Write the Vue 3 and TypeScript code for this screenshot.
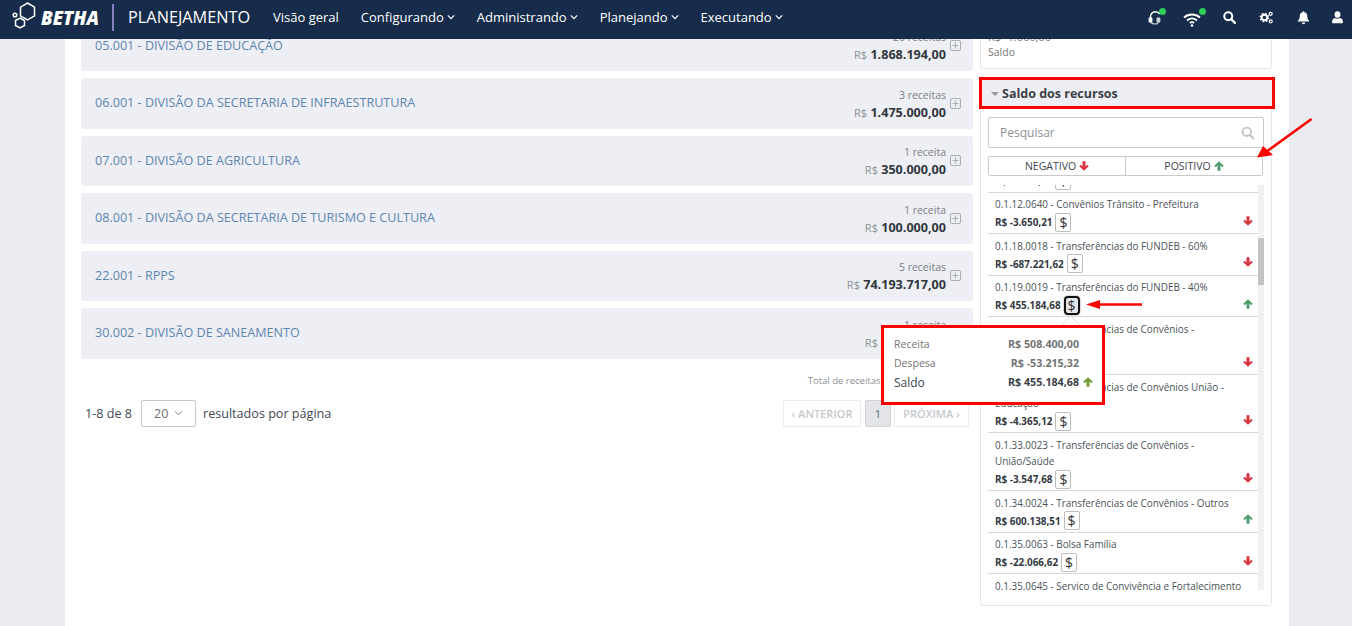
<template>
  <div class="page">
    <header class="navbar">
      <div class="brand">
        <svg class="logo" viewBox="0 0 26 30" fill="none" stroke="#fff" stroke-width="1.5">
          <path d="M16.5 1l7 4.200v8.600l-7 4.200-7-4.200V5.200z"></path>
          <path d="M9 16l4.500 2.500v5L9 26l-4.500-2.500v-5z"></path>
          <circle cx="4" cy="13" r="1.800"></circle>
        </svg>
        <span class="brand-name">BETHA</span>
        <span class="brand-sep"></span>
        <span class="brand-app">PLANEJAMENTO</span>
      </div>
      <nav class="menu">
        <a v-for="item in menu" :key="item.label" class="menu-item">
          {{ item.label }}
          <svg v-if="item.sub" class="chev" viewBox="0 0 10 6" fill="none" stroke="currentColor" stroke-width="1.600">
            <path d="M1 1l4 4 4-4"></path>
          </svg>
        </a>
      </nav>
      <div class="nav-icons">
        <span class="nav-icon">
          <svg viewBox="0 0 18 18" fill="none" stroke="#fff" stroke-width="1.700">
            <path d="M3 11V8a6 6 0 0 1 11-3.200"></path>
            <rect x="1.500" y="9.500" width="3" height="5" rx="1" fill="#fff"></rect>
            <rect x="11" y="9.500" width="3" height="5" rx="1" fill="#cfd4da" stroke="#cfd4da"></rect>
            <path d="M4 15.500c2 1.500 6 1.500 8 .5" stroke="#cfd4da"></path>
          </svg>
          <i class="dot"></i>
        </span>
        <span class="nav-icon wifi">
          <svg viewBox="0 0 18 18" fill="none" stroke="#fff" stroke-width="1.800">
            <path d="M1 7.500c4.500-4 11.500-4 16 0"></path>
            <path d="M4 10.500c3-2.500 7-2.500 10 0"></path>
            <path d="M6.800 13c1.300-1 3.100-1 4.400 0"></path>
            <circle cx="9" cy="15.500" r="1.200" fill="#fff" stroke="none"></circle>
          </svg>
          <i class="dot"></i>
        </span>
        <span class="nav-icon">
          <svg viewBox="0 0 18 18" fill="none" stroke="#fff">
            <circle cx="7.500" cy="7.500" r="4.800" stroke-width="2.400"></circle>
            <path d="M11 11l4.500 4.500" stroke-width="2.800" stroke-linecap="round"></path>
          </svg>
        </span>
        <span class="nav-icon">
          <svg viewBox="0 0 18 18" fill="none" stroke="#fff">
            <circle cx="6.500" cy="9" r="3.400" stroke-width="2.400"></circle>
            <circle cx="6.500" cy="9" r="5" stroke-width="1.600" stroke-dasharray="2 1.930"></circle>
            <circle cx="14" cy="4.500" r="1.800" stroke-width="1.500"></circle>
            <circle cx="14" cy="13.500" r="1.800" stroke-width="1.500"></circle>
          </svg>
        </span>
        <span class="nav-icon">
          <svg viewBox="0 0 18 18" fill="#fff">
            <path d="M9 1.500c.7 0 1.100.5 1.100 1.100 2.300.5 3.400 2.300 3.400 4.600 0 3 .9 4.600 2.200 5.800v.8H2.300V13c1.300-1.200 2.200-2.800 2.200-5.800 0-2.300 1.100-4.100 3.400-4.600 0-.6.400-1.100 1.100-1.100z"></path>
            <path d="M7 15h4a2 2 0 0 1-4 0z"></path>
          </svg>
        </span>
        <span class="nav-icon user">
          <svg viewBox="0 0 18 18" fill="#fff">
            <ellipse cx="9" cy="5.500" rx="3.500" ry="4"></ellipse>
            <path d="M3.500 16c-.8 0-1-.5-1-1.300 0-2.900 1-5 3.500-5.200 1.800 1.200 4.200 1.200 6 0 2.500.2 3.500 2.300 3.500 5.200 0 .8-.2 1.300-1 1.300z"></path>
          </svg>
        </span>
      </div>
    </header>

    <main class="sheet">
      <section class="left">
        <div class="rows">
          <article v-for="row in divisions" :key="row.name" class="division">
            <span class="division-name">{{ row.name }}</span>
            <div class="division-total">
              <div class="division-count">{{ row.count }}</div>
              <div class="division-value"><small>R$</small> {{ row.value }}</div>
            </div>
            <svg class="plus" viewBox="0 0 11 11" fill="none" stroke="#a9adb3">
              <rect x=".5" y=".5" width="10" height="10" rx="1.500"></rect>
              <path d="M5.500 2.500v6M2.500 5.500h6"></path>
            </svg>
          </article>
        </div>
        <div class="total-line">Total de receitas: R$ 83.456.911,00</div>
        <div class="pager">
          <div class="pager-info">
            <span>1-8 de 8</span>
            <div class="page-size">
              20
              <svg viewBox="0 0 10 6" fill="none" stroke="#777" stroke-width="1">
                <path d="M1 1l4 4 4-4"></path>
              </svg>
            </div>
            <span>resultados por página</span>
          </div>
          <div class="pager-buttons">
            <button class="pg pg-prev">&lsaquo; ANTERIOR</button>
            <button class="pg pg-num">1</button>
            <button class="pg pg-next">PRÓXIMA &rsaquo;</button>
          </div>
        </div>
      </section>

      <aside class="right">
        <div class="summary">
          <div class="summary-value">R$ -1.000,00</div>
          <div class="summary-label">Saldo</div>
        </div>
        <div class="panel">
          <div class="panel-head">
            <span class="caret"></span>
            Saldo dos recursos
          </div>
          <div class="search">
            <span>Pesquisar</span>
            <svg viewBox="0 0 14 14" fill="none" stroke="#c4c4c4">
              <circle cx="5.800" cy="5.800" r="4.200" stroke-width="1.800"></circle>
              <path d="M9 9l4 4" stroke-width="2.200"></path>
            </svg>
          </div>
          <div class="filters">
            <button class="filter">
              NEGATIVO
              <svg class="arrow down" viewBox="0 0 12 12"><path :d="arrowPath"></path></svg>
            </button>
            <button class="filter">
              POSITIVO
              <svg class="arrow up" viewBox="0 0 12 12"><path :d="arrowPath"></path></svg>
            </button>
          </div>
          <div class="list-wrap">
            <div class="list">
              <div v-for="item in resources" :key="item.title" class="resource">
                <div class="resource-title">{{ item.title }}</div>
                <div class="resource-line">
                  <strong>{{ item.value }}</strong>
                  <span class="money" :class="{ active: item.active }">$</span>
                  <svg class="arrow" :class="item.value.includes('-') ? 'down' : 'up'" viewBox="0 0 12 12">
                    <path :d="arrowPath"></path>
                  </svg>
                </div>
              </div>
            </div>
            <div class="scrollbar"><div class="thumb"></div></div>
          </div>
        </div>
      </aside>
    </main>

    <div class="tip">
      <svg class="tip-notch" viewBox="0 0 18 9"><path d="M0 9L9 0l9 9" fill="#fff" stroke="#ddd"></path></svg>
      <div class="tip-row"><span>Receita</span><b>R$ 508.400,00</b></div>
      <div class="tip-row"><span>Despesa</span><b>R$ -53.215,32</b></div>
      <div class="tip-row saldo">
        <span>Saldo</span>
        <b>R$ 455.184,68</b>
        <svg viewBox="0 0 12 12"><path :d="arrowPath"></path></svg>
      </div>
    </div>

    <svg class="marks" viewBox="0 0 1352 626" fill="#f00" stroke="none">
      <path d="M1311.500 119L1266 152" stroke="#f00" stroke-width="2.600"></path>
      <path d="M1257 157.500L1263 146L1273 155z"></path>
      <path d="M1142 304.500H1098" stroke="#f00" stroke-width="2.600"></path>
      <path d="M1086 304.500L1100 300V309z"></path>
    </svg>
  </div>
</template>

<script setup lang="ts">
interface Resource {
  title: string
  value: string
  active?: boolean
}

const arrowPath = 'M6 .3l5.700 5.500-1.700 1.700-2.200-2.100v6.300H4.200V5.400L2 7.500.3 5.800z'

const menu = [
  { label: 'Visão geral', sub: false },
  { label: 'Configurando', sub: true },
  { label: 'Administrando', sub: true },
  { label: 'Planejando', sub: true },
  { label: 'Executando', sub: true },
]

const divisions = [
  { name: '05.001 - DIVISÃO DE EDUCAÇÃO', count: '20 receitas', value: '1.868.194,00' },
  { name: '06.001 - DIVISÃO DA SECRETARIA DE INFRAESTRUTURA', count: '3 receitas', value: '1.475.000,00' },
  { name: '07.001 - DIVISÃO DE AGRICULTURA', count: '1 receita', value: '350.000,00' },
  { name: '08.001 - DIVISÃO DA SECRETARIA DE TURISMO E CULTURA', count: '1 receita', value: '100.000,00' },
  { name: '22.001 - RPPS', count: '5 receitas', value: '74.193.717,00' },
  { name: '30.002 - DIVISÃO DE SANEAMENTO', count: '1 receita', value: '508.400,00' },
]

const resources: Resource[] = [
  { title: '0.1.11.0000 - Convênios', value: 'R$ -1.200,00' },
  { title: '0.1.12.0640 - Convênios Trânsito - Prefeitura', value: 'R$ -3.650,21' },
  { title: '0.1.18.0018 - Transferências do FUNDEB - 60%', value: 'R$ -687.221,62' },
  { title: '0.1.19.0019 - Transferências do FUNDEB - 40%', value: 'R$ 455.184,68', active: true },
  { title: '0.1.31.0021 - Transferências de Convênios - Estado/Educação', value: 'R$ -2.310,40' },
  { title: '0.1.32.0022 - Transferências de Convênios União - Educação', value: 'R$ -4.365,12' },
  { title: '0.1.33.0023 - Transferências de Convênios - União/Saúde', value: 'R$ -3.547,68' },
  { title: '0.1.34.0024 - Transferências de Convênios - Outros', value: 'R$ 600.138,51' },
  { title: '0.1.35.0063 - Bolsa Família', value: 'R$ -22.066,62' },
  { title: '0.1.35.0645 - Serviço de Convivência e Fortalecimento', value: 'R$ -1.050,00' },
]
</script>

<style>
html,
body {
  margin: 0;
  background: #ebecf0;
}
</style>

<style scoped>
.page {
  position: relative;
  height: 626px;
  overflow: hidden;
  background: #ebecf0;
  font-family: 'Open Sans', sans-serif;
  color: #3c4650;
}

.navbar {
  position: relative;
  z-index: 3;
  display: flex;
  align-items: center;
  height: 39px;
  padding-bottom: 5px;
  box-sizing: border-box;
  background: #162c4a;
  color: #fff;
}

.brand {
  display: flex;
  align-items: center;
  padding-left: 11px;
  width: 273px;
  box-sizing: border-box;
  flex: none;
}

.logo {
  width: 26px;
  height: 30px;
}

.brand-name {
  margin-left: 4px;
  font-size: 18.500px;
  font-weight: 800;
  font-style: italic;
}

.brand-sep {
  width: 2px;
  height: 27px;
  margin: 0 14px 0 13px;
  background: #8683c0;
}

.brand-app {
  font-size: 16.300px;
  line-height: 20px;
}

.menu {
  display: flex;
  gap: 22px;
  font-size: 13px;
}

.menu-item {
  display: flex;
  align-items: center;
  gap: 3px;
  white-space: nowrap;
}

.chev {
  width: 8px;
  height: 6px;
}

.nav-icons {
  display: flex;
  align-items: center;
  margin-left: auto;
  padding-right: 7px;
  gap: 22px;
}

.nav-icon {
  position: relative;
  display: block;
  width: 15px;
  height: 15px;
}

.nav-icon.user {
  margin-left: -3px;
}

.nav-icon svg {
  display: block;
  width: 15px;
  height: 15px;
}

.nav-icon.wifi svg {
  width: 18px;
  height: 18px;
  margin-left: -2px;
}

.dot {
  position: absolute;
  top: -1.5px;
  right: -2.5px;
  width: 7px;
  height: 7px;
  border-radius: 50%;
  background: #2ecc58;
}

.wifi .dot {
  right: -5.5px;
}

.sheet {
  display: flex;
  gap: 7px;
  height: 606px;
  margin: -18.5px 63px 0 65px;
  padding: 0 16px;
  background: #fff;
}

.left {
  width: 892px;
  flex: none;
}

.rows {
  display: flex;
  flex-direction: column;
  gap: 7px;
}

.division {
  display: flex;
  align-items: center;
  height: 50.5px;
  padding: 0 12px 0 14px;
  box-sizing: border-box;
  background: #eeeff4;
  border-radius: 3px;
}

.division-name {
  flex: 1;
  margin-bottom: 1px;
  font-size: 12.600px;
  color: #5d86b1;
}

.division-total {
  margin-top: 3px;
  text-align: right;
}

.division-count {
  font-size: 10.5px;
  line-height: 16px;
  color: #7a7f85;
}

.division-value {
  font-size: 12.600px;
  line-height: 20px;
  font-weight: 700;
  color: #30363d;
}

.division-value small {
  font-size: 11px;
  font-weight: 400;
  color: #8b9096;
}

.plus {
  width: 11px;
  height: 11px;
  margin-left: 4px;
}

.total-line {
  margin-top: 15px;
  padding-right: 12px;
  font-size: 9.500px;
  line-height: 14px;
  text-align: right;
  color: #8a8f94;
}

.pager {
  display: flex;
  align-items: center;
  justify-content: space-between;
  margin-top: 12px;
  padding: 0 4px;
}

.pager-info {
  display: flex;
  align-items: center;
  gap: 7px;
  font-size: 12.600px;
  color: #3f4a55;
}

.page-size {
  display: flex;
  align-items: center;
  justify-content: space-between;
  width: 55px;
  height: 27px;
  margin-left: 2px;
  padding: 0 12px;
  box-sizing: border-box;
  border: 1px solid #c8c8c8;
  border-radius: 2px;
  color: #6d7278;
}

.page-size svg {
  width: 9px;
  height: 6px;
}

.pager-buttons {
  display: flex;
  gap: 3px;
}

.pg {
  height: 27px;
  padding: 0;
  box-sizing: border-box;
  border: 1px solid #ececec;
  border-radius: 2px;
  background: #fff;
  font-family: inherit;
  font-size: 11px;
  font-weight: 600;
  color: #c6c9cc;
}

.pg-prev {
  width: 78px;
  margin-right: 1px;
}

.pg-next {
  width: 75px;
}

.pg-num {
  width: 26px;
  border-color: #cfd2d6;
  background: #e2e4e8;
  color: #5a6a7a;
  font-weight: 400;
  font-size: 11px;
}

.right {
  width: 292px;
  flex: none;
}

.summary {
  height: 48.5px;
  padding: 8px 7px 0;
  box-sizing: border-box;
  border: 1px solid #e6e6e6;
  border-radius: 0 0 3px 3px;
  color: #777;
  font-size: 10.5px;
}

.summary-value {
  font-size: 11px;
  line-height: 14px;
}

.summary-label {
  margin-top: 1px;
  line-height: 14px;
}

.panel {
  width: 292px;
  height: 529px;
  margin-top: 8px;
  box-sizing: border-box;
  border: 1px solid #e6e6e6;
  border-radius: 3px;
}

.panel-head {
  display: flex;
  align-items: center;
  gap: 3px;
  width: 296px;
  height: 32px;
  margin: -1px 0 0 -2px;
  padding-left: 9px;
  box-sizing: border-box;
  border: 3px solid #f00;
  background: #eeeff4;
  font-size: 12.500px;
  font-weight: 700;
  color: #3c4148;
}

.caret {
  width: 0;
  height: 0;
  margin-top: 2px;
  border-style: solid;
  border-width: 4px 4px 0;
  border-color: #9a9a9a transparent transparent;
}

.search {
  display: flex;
  align-items: center;
  justify-content: space-between;
  width: 276px;
  height: 31px;
  margin: 8px 7px 0;
  padding: 0 8px 0 11px;
  box-sizing: border-box;
  border: 1px solid #c9c9c9;
  border-radius: 2px;
  font-size: 12px;
  color: #8b8f94;
}

.search svg {
  width: 14px;
  height: 14px;
}

.filters {
  display: flex;
  width: 275px;
  height: 20px;
  margin: 8px 7px 0;
  box-sizing: border-box;
  border: 1px solid #c9c9c9;
  border-radius: 2px;
}

.filter {
  flex: 1;
  display: flex;
  align-items: center;
  justify-content: center;
  gap: 3px;
  padding: 0;
  border: 0;
  background: #fff;
  font-family: inherit;
  font-size: 10.500px;
  color: #3c4650;
}

.filter + .filter {
  border-left: 1px solid #c9c9c9;
}

.arrow {
  width: 10px;
  height: 10px;
  flex: none;
}

.arrow.down {
  transform: rotate(180deg);
  fill: #d9343f;
}

.arrow.up {
  fill: #4f9e72;
}

.list-wrap {
  display: flex;
  height: 405px;
  margin: 9px 7px 0;
  overflow: hidden;
}

.list {
  width: 270px;
  flex: none;
  margin-top: -34px;
}

.resource {
  padding: 3.5px 7px 0;
  box-sizing: border-box;
  border-bottom: 1px solid #d8d8d8;
}

.resource-title {
  font-size: 9.900px;
  line-height: 16.500px;
  color: #4a5157;
}

.resource-line {
  display: flex;
  align-items: center;
  height: 19px;
  margin-bottom: 1.5px;
  font-size: 9.900px;
  color: #33393f;
}

.resource-line .arrow {
  margin-left: auto;
  margin-right: -2px;
  margin-top: -3px;
}

.money {
  display: flex;
  align-items: center;
  justify-content: center;
  width: 16px;
  height: 19px;
  margin-left: 3px;
  box-sizing: border-box;
  border: 1px solid #bdbdbd;
  border-radius: 2px;
  font-size: 14px;
  color: #333;
}

.money.active {
  border: 2px solid #111;
  border-radius: 4px;
  background: #e6e7ea;
  box-shadow: 0 0 0 1px #ddd;
}

.scrollbar {
  width: 6px;
  background: #f1f1f1;
}

.thumb {
  height: 47px;
  margin-top: 53px;
  background: #c4c4c4;
}

.tip {
  position: absolute;
  z-index: 2;
  left: 881px;
  top: 325px;
  width: 224px;
  height: 80px;
  box-sizing: border-box;
  padding: 6px 9px 0 10px;
  border: 3px solid #f00;
  background: #fff;
}

.tip-notch {
  position: absolute;
  top: -12px;
  left: 178px;
  width: 18px;
  height: 9px;
}

.tip-row {
  display: flex;
  align-items: center;
  height: 19px;
  padding-right: 14px;
  font-size: 10.500px;
  color: #747474;
}

.tip-row span {
  flex: 1;
}

.tip-row b {
  font-size: 10.700px;
  font-weight: 700;
}

.tip-row.saldo {
  position: relative;
  height: 20px;
}

.tip-row.saldo span {
  font-size: 12px;
  color: #3c4650;
}

.tip-row.saldo b {
  color: #3c4148;
}

.tip-row.saldo svg {
  position: absolute;
  right: 0;
  width: 10px;
  height: 10px;
  fill: #6f9d2f;
}

.marks {
  position: absolute;
  inset: 0;
  z-index: 2;
  width: 1352px;
  height: 626px;
  pointer-events: none;
}
</style>
